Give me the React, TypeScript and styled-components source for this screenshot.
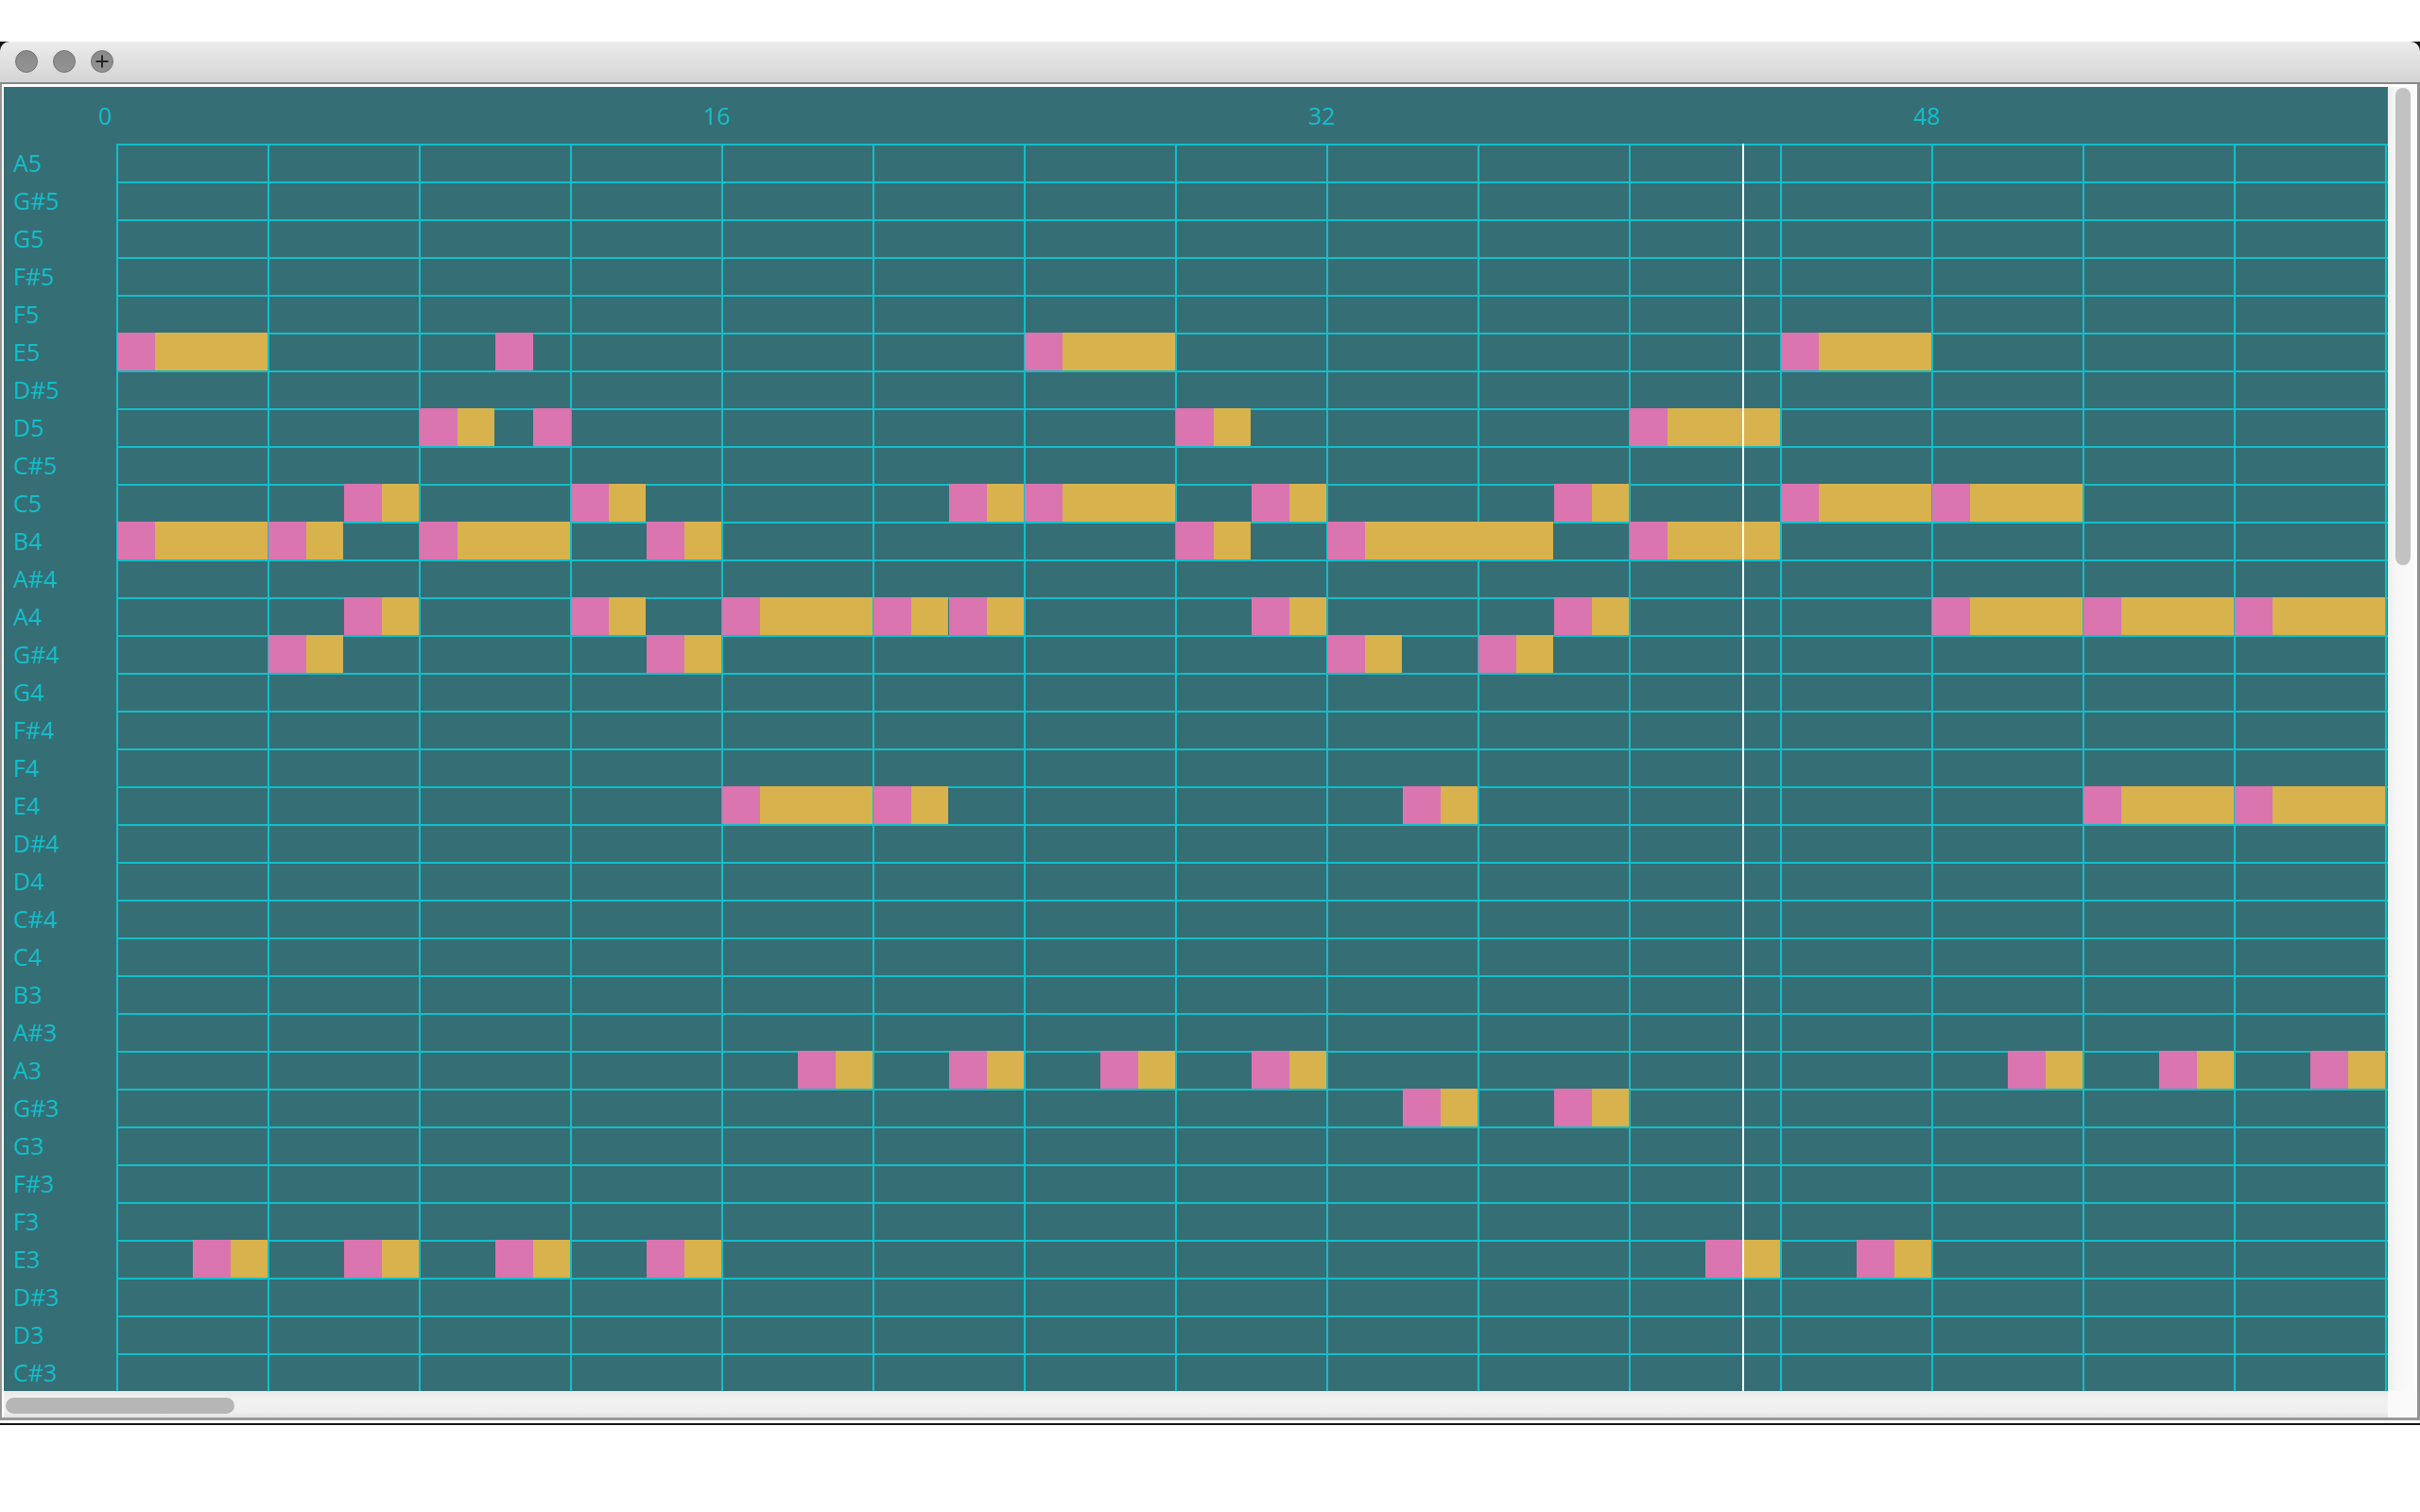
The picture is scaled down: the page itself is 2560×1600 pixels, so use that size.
import React from 'react'
import styled, { createGlobalStyle } from 'styled-components'

const GlobalStyle = createGlobalStyle`
  html, body {
    margin: 0;
    padding: 0;
    background: #ffffff;
  }
  * {
    box-sizing: border-box;
  }
`

const LINE = '#12bec8'
const BG = '#366e76'
const PINK = '#da75b0'
const GOLD = '#d8b24c'

const PITCHES = [
  'A5', 'G#5', 'G5', 'F#5', 'F5', 'E5', 'D#5', 'D5', 'C#5', 'C5', 'B4',
  'A#4', 'A4', 'G#4', 'G4', 'F#4', 'F4', 'E4', 'D#4', 'D4', 'C#4', 'C4',
  'B3', 'A#3', 'A3', 'G#3', 'G3', 'F#3', 'F3', 'E3', 'D#3', 'D3', 'C#3',
]

// [start step, length in steps]
const NOTES: Record<string, [number, number][]> = {
  E5: [[0, 4], [10, 1], [24, 4], [44, 4]],
  D5: [[8, 2], [11, 1], [28, 2], [40, 4]],
  C5: [[6, 2], [12, 2], [22, 2], [24, 4], [30, 2], [38, 2], [44, 4], [48, 4]],
  B4: [[0, 4], [4, 2], [8, 4], [14, 2], [28, 2], [32, 6], [40, 4]],
  A4: [[6, 2], [12, 2], [16, 4], [20, 2], [22, 2], [30, 2], [38, 2], [48, 4], [52, 4], [56, 4]],
  'G#4': [[4, 2], [14, 2], [32, 2], [36, 2]],
  E4: [[16, 4], [20, 2], [34, 2], [52, 4], [56, 4]],
  A3: [[18, 2], [22, 2], [26, 2], [30, 2], [50, 2], [54, 2], [58, 2]],
  'G#3': [[34, 2], [38, 2]],
  E3: [[2, 2], [6, 2], [10, 2], [14, 2], [42, 2], [46, 2]],
}

const BARS = [0, 16, 32, 48]
const PLAYHEAD_STEP = 43

const Window = styled.div`
  position: relative;
  margin-top: 44px;
  width: 2560px;

  &::before,
  &::after {
    content: '';
    position: absolute;
    top: 0;
    width: 10px;
    height: 10px;
    background: #151515;
  }
  &::before {
    left: 0;
  }
  &::after {
    right: 0;
  }
`

const TitleBar = styled.div`
  position: relative;
  z-index: 1;
  height: 45px;
  display: flex;
  align-items: center;
  gap: 16px;
  padding: 0 0 2px 16px;
  background: linear-gradient(to bottom, #ececec, #d4d4d4);
  border-bottom: 2px solid #878787;
  border-radius: 10px 10px 0 0;
`

const Light = styled.div`
  width: 24px;
  height: 24px;
  border-radius: 50%;
  background: linear-gradient(to bottom, #8a8a8a, #939393);
  border: 1px solid #717171;
  display: flex;
  align-items: center;
  justify-content: center;
`

const Body = styled.div`
  display: grid;
  grid-template-columns: 2522px 31px;
  grid-template-rows: 1380px 28px;
  padding: 3px 0 0 2px;
  background: #ffffff;
  border-left: 2px solid #959595;
  border-right: 3px solid #919191;
  border-bottom: 3px solid #9a9a9a;
`

const Viewport = styled.div`
  position: relative;
  overflow: hidden;
  background: ${BG};
  font-family: 'Open Sans', 'DejaVu Sans', sans-serif;
  font-size: 25px;
  color: ${LINE};
`

const Ruler = styled.div`
  height: 60px;
  display: flex;
  padding: 13px 0 0 100px;
  line-height: 34px;
`

const RulerMark = styled.div`
  flex: none;
  width: 640px;
`

const Row = styled.div`
  display: flex;
  height: 40px;
`

const PitchLabel = styled.div`
  flex: none;
  width: 119px;
  padding-left: 10px;
  line-height: 40px;
  white-space: nowrap;
`

const Track = styled.div`
  flex: none;
  width: 2403px;
  display: grid;
  grid-template-columns: repeat(60, 40px);
  grid-template-rows: 40px;
  background-image: linear-gradient(${LINE}, ${LINE}),
    repeating-linear-gradient(to right, ${LINE} 0 2px, transparent 2px 160px);
  background-size: 100% 2px, 100% 100%;
  background-repeat: no-repeat;
`

const Note = styled.div`
  grid-row: 1;
  display: flex;
  margin-left: 1px;
`

const NoteHead = styled.div`
  flex: none;
  width: 40px;
  background: ${PINK};
`

const NoteTail = styled.div`
  flex: 1;
  background: ${GOLD};
`

const Playhead = styled.div`
  position: absolute;
  top: 60px;
  bottom: 0;
  width: 2px;
  background: #ffffff;
`

const VScroll = styled.div`
  padding: 1px 0 0 8px;
  background: linear-gradient(to right, #eeeeee, #f7f7f7 30%, #fafafa 85%, #ffffff);
`

const VThumb = styled.div`
  width: 16px;
  height: 505px;
  border-radius: 8px;
  background: #c2c2c2;
`

const HScroll = styled.div`
  padding: 7px 0 0 2px;
  background: linear-gradient(to bottom, #e9e9e9, #f1f1f1 30%, #efefef 80%, #e2e2e2);
`

const HThumb = styled.div`
  width: 242px;
  height: 17px;
  border-radius: 9px;
  background: #b6b6b6;
`

const Corner = styled.div`
  background: #fafafa;
`

const DockEdge = styled.div`
  margin-top: 3px;
  height: 2px;
  width: 2560px;
  background: #141414;
`

const PlusIcon = () => (
  <svg width="14" height="14" viewBox="0 0 14 14">
    <path d="M7 0.5v13M0.5 7h13" stroke="#262626" strokeWidth="2" fill="none" />
  </svg>
)

const App = () => {
  return (
    <>
      <GlobalStyle />
      <Window>
        <TitleBar>
          <Light />
          <Light />
          <Light>
            <PlusIcon />
          </Light>
        </TitleBar>
        <Body>
          <Viewport>
            <Ruler>
              {BARS.map((b) => (
                <RulerMark key={b}>{b}</RulerMark>
              ))}
            </Ruler>
            {PITCHES.map((p) => (
              <Row key={p}>
                <PitchLabel>{p}</PitchLabel>
                <Track>
                  {(NOTES[p] || []).map(([start, len]) => (
                    <Note key={start} style={{ gridColumn: `${start + 1} / span ${len}` }}>
                      <NoteHead />
                      {len > 1 && <NoteTail />}
                    </Note>
                  ))}
                </Track>
              </Row>
            ))}
            <Playhead style={{ left: 119 + PLAYHEAD_STEP * 40 }} />
          </Viewport>
          <VScroll>
            <VThumb />
          </VScroll>
          <HScroll>
            <HThumb />
          </HScroll>
          <Corner />
        </Body>
      </Window>
      <DockEdge />
    </>
  )
}

export default App
